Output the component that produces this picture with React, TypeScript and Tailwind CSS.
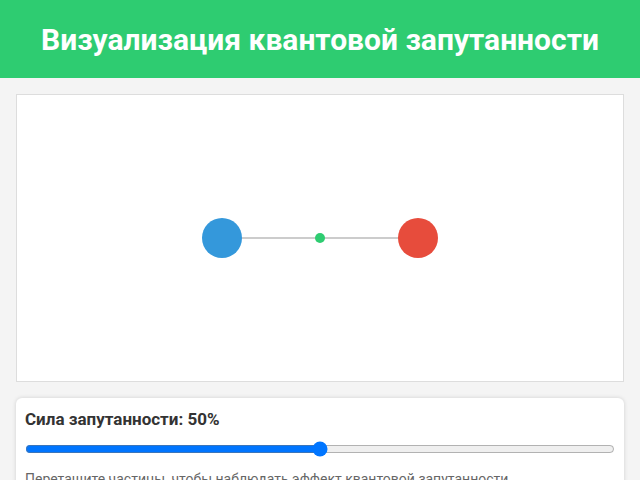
import { useState } from "react";

export default function App() {
  const [strength, setStrength] = useState(50);

  return (
    <div className="min-h-screen bg-[#f4f4f4] font-['Roboto',sans-serif] text-[#333]">
      <header className="flex h-[78px] items-center justify-center bg-[#2ecc71]">
        <h1 className="text-[30px] font-bold text-white">Визуализация квантовой запутанности</h1>
      </header>

      <main className="flex flex-col gap-4 p-4">
        {/* Поле с частицами */}
        <div className="relative h-[288px] border border-[#ddd] bg-white">
          <svg className="absolute inset-0 h-full w-full" viewBox="0 0 606 286">
            <line x1="205" y1="143" x2="401" y2="143" stroke="#ccc" strokeWidth="2" />
            <circle cx="205" cy="143" r="20" fill="#3498db" />
            <circle cx="401" cy="143" r="20" fill="#e74c3c" />
            <circle cx="303" cy="143" r="5" fill="#2ecc71" />
          </svg>
        </div>

        {/* Панель управления */}
        <div className="rounded-md bg-white px-[9px] pb-3 pt-[10px] shadow-[0_0_4px_rgba(0,0,0,0.15)]">
          <div className="text-[17px] font-bold leading-[22px]">Сила запутанности: {strength}%</div>
          <input
            type="range"
            min={0}
            max={100}
            value={strength}
            onChange={(e) => setStrength(Number(e.target.value))}
            className="mt-[11px] w-full"
          />
          <p className="mt-[5px] text-sm leading-5 text-[#666]">
            Перетащите частицы, чтобы наблюдать эффект квантовой запутанности
          </p>
        </div>
      </main>
    </div>
  );
}
